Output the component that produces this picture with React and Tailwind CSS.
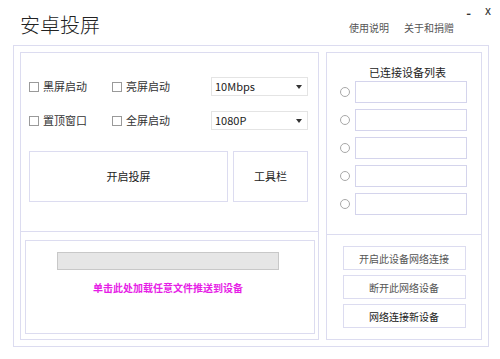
import React from 'react';

const font = { fontFamily: '"Noto Sans CJK SC", "Noto Sans", sans-serif' };

function Check({ label }) {
  return (
    <label className="flex items-center gap-[4px] text-[11px] text-[#333]">
      <span className="w-[10px] h-[10px] border border-[#9a9a9a] bg-white" />
      {label}
    </label>
  );
}

function Select({ value }) {
  return (
    <div className="w-[97px] h-[19px] border border-[#e4e4e4] bg-white flex items-center justify-between pl-[3px] pr-[5px] text-[11px] text-[#222]">
      <span>{value}</span>
      <span className="w-0 h-0 border-l-[3px] border-r-[3px] border-t-[4px] border-l-transparent border-r-transparent border-t-[#333]" />
    </div>
  );
}

export default function App() {
  const devices = [0, 1, 2, 3, 4];
  return (
    <div className="w-[500px] h-[359px] bg-white relative overflow-hidden" style={font}>
      <div className="absolute right-[29px] top-[3px] text-[13px] font-bold text-[#333]">-</div>
      <div className="absolute right-[9px] top-[1px] text-[12px] text-[#333]">x</div>

      <div className="h-[45px] flex items-end justify-between pl-[20px] pr-[46px]">
        <h1 className="text-[20px] leading-none font-light text-[#222] mb-[10px]">安卓投屏</h1>
        <div className="flex gap-[15px] text-[10px] text-[#555] mb-[10px]">
          <span>使用说明</span>
          <span>关于和捐赠</span>
        </div>
      </div>

      <div className="ml-[13px] w-[476px] h-[302px] border border-[#dcdcf0] p-[6px] flex gap-[7px]">
        {/* left */}
        <div className="w-[300px] border border-[#dcdcf0] flex flex-col">
          <div className="h-[179px] border-b border-[#dcdcf0] pt-[24px] pl-[8px] pr-[10px]">
            <div className="flex items-center">
              <div className="w-[83px]"><Check label="黑屏启动" /></div>
              <div className="w-[99px]"><Check label="亮屏启动" /></div>
              <Select value="10Mbps" />
            </div>
            <div className="flex items-center mt-[15px]">
              <div className="w-[83px]"><Check label="置顶窗口" /></div>
              <div className="w-[99px]"><Check label="全屏启动" /></div>
              <Select value="1080P" />
            </div>
            <div className="flex gap-[5px] mt-[21px]">
              <button className="w-[199px] h-[51px] border border-[#dcdcf0] bg-white text-[11px] text-[#222]">开启投屏</button>
              <button className="w-[75px] h-[51px] border border-[#dcdcf0] bg-white text-[11px] text-[#222]">工具栏</button>
            </div>
          </div>
          <div className="flex-1 pt-[8px] pl-[4px] pr-[3px] pb-[5px]">
            <div className="h-full border border-[#dcdcf0] flex flex-col items-center pt-[11px]">
              <div className="w-[222px] h-[18px] bg-[#e6e6e6] border border-[#c8c8c8] -ml-[4px]" />
              <p className="mt-[10px] text-[10px] font-bold text-[#e61ee6] -ml-[4px]">单击此处加载任意文件推送到设备</p>
            </div>
          </div>
        </div>

        {/* right */}
        <div className="w-[157px] border border-[#dcdcf0] flex flex-col">
          <div className="h-[182px] border-b border-[#dcdcf0] pt-[12px] pl-[13px] pr-[14px]">
            <p className="text-center text-[11px] text-[#222] leading-[14px] pl-[8px]">已连接设备列表</p>
            <div className="mt-[2px] flex flex-col gap-[6px]">
              {devices.map((d) => (
                <div key={d} className="flex items-center gap-[5px]">
                  <span className="w-[10px] h-[10px] rounded-full border border-[#a8a8a8] bg-white" />
                  <div className="w-[112px] h-[22px] border border-[#d4d4ec] bg-white" />
                </div>
              ))}
            </div>
          </div>
          <div className="flex-1 flex flex-col items-center pt-[11px] gap-[5px]">
            <button className="w-[123px] h-[24px] border border-[#dcdcf0] bg-white text-[10px] text-[#555]">开启此设备网络连接</button>
            <button className="w-[123px] h-[24px] border border-[#dcdcf0] bg-white text-[10px] text-[#555]">断开此网络设备</button>
            <button className="w-[123px] h-[24px] border border-[#dcdcf0] bg-white text-[10px] text-[#222]">网络连接新设备</button>
          </div>
        </div>
      </div>
    </div>
  );
}
